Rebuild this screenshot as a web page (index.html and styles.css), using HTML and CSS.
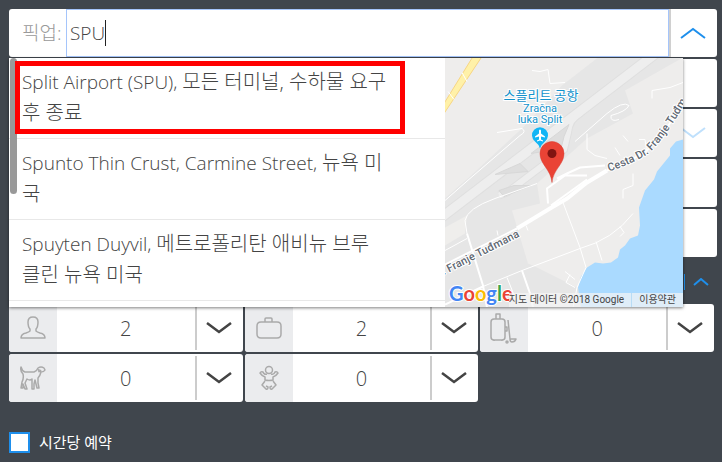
FILE: index.html
```html
<!DOCTYPE html>
<html lang="ko">
<head>
    <meta charset="UTF-8">
    <meta name="viewport" content="width=device-width, initial-scale=1.0">
    <title>픽업 예약</title>
    <link rel="stylesheet" href="styles.css">
</head>
<body>

    <form class="booking">
        <div class="field pickup">
            <label class="pickup-label" for="pickup">픽업:</label>
            <div class="pickup-box">
                <input class="pickup-input" id="pickup" type="text" value="SPU" autocomplete="off">
                <span class="caret"></span>
            </div>
            <button class="toggle" type="button" aria-label="닫기">
                <svg width="26" height="12" viewBox="0 0 26 12"><path d="M1 11 L13 2 L25 11"/></svg>
            </button>

            <!-- suggestions and map -->
            <div class="dropdown">
                <ul class="results">
                    <li class="result"><span class="highlight"></span>Split Airport (SPU), <span class="ko">모든 터미널, 수하물 요구 후 종료</span></li>
                    <li class="result">Spunto Thin Crust, Carmine Street, <span class="ko">뉴욕 미국</span></li>
                    <li class="result">Spuyten Duyvil, <span class="ko">메트로폴리탄 애비뉴 브루<span class="keep">클린</span> 뉴욕 미국</span></li>
                </ul>
                <span class="scroll-thumb"></span>
                <div class="map">
                    <svg class="map-canvas" viewBox="0 0 238 250" preserveAspectRatio="xMidYMid slice">
                        <rect width="238" height="250" fill="#eeedec"/>
                        <!-- airport ground -->
                        <path fill="#e6e6e6" d="M153 0 L117 28 L78 70 L25 119 Q12 130 0 141 V250 H150 L132 230 L92 210 L83 206 L67 153 L95 146 L92 126 L142 81 L188 56 L180 33 L238 0 Z"/>
                        <path fill="#efeeec" d="M0 170 L22 158 L20 176 L0 188 Z"/>
                        <!-- runways -->
                        <path class="runway-edge" d="M212 -5 L-5 161"/>
                        <path class="runway-edge thin" d="M136 55 Q124 62 123 75 L119 92 L62 135 L54 138"/>
                        <path class="runway" d="M212 -5 L-5 161"/>
                        <path class="runway thin" d="M136 55 Q124 62 123 75 L119 92 L62 135 L54 138"/>
                        <path class="island" d="M124 67 L119 79 L116 91 L86 96 Z M50 117 L75 106 L83 114 Z M54 133 L69 128 L86 128 L59 139 Z"/>
                        <!-- sea -->
                        <path fill="#aadaff" d="M238 82 L231 84 L225 91 V98 L212 114 L209 122 L200 133 L194 150 L195 168 L193 178 L185 181 L180 188 L175 192 L173 200 L166 205 L158 206 L150 205 L142 210 L136 219 L133 230 L136 250 H238 Z"/>
                        <!-- roads -->
                        <path fill="#fff1a8" stroke="#f7d583" d="M-1 46 L28 -1 H37 L-1 56 Z"/>
                        <path class="road main" d="M72 171 L105 151 L122 141 L142 125 L162 113"/>
                        <path class="road mid" d="M-4 209 L72 171 M162 113 L184 104 L203 92 L222 70 L240 44"/>
                        <path class="road mid" d="M103 146 L102 131 L120 118 H142 M106 148 L142 122 M112 121 L122 116 L135 110 L160 108"/>
                        <path class="road mid" d="M22 176 L38 228 L42 250 M77 213 L85 236 L88 250 M0 247 L38 229"/>
                        <path class="road" d="M38 229 L77 213 L135 191 Q168 182 188 156 M118 145 L135 190 L141 210 L132 230 L128 250"/>
                        <path class="road" d="M22 176 L20 163 Q22 151 50 141 L92 126 M0 193 L22 181 M62 220 L72 245 M151 184 L157 203 M175 169 L179 175 L175 179 M125 217 L121 225 L130 230 M120 214 L130 222"/>
                        <path class="road" d="M130 84 L162 56 Q178 43 184 48 Q181 54 166 58 Q165 65 174 62 M142 76 V92 L150 98 L162 101"/>
                        <path class="road" d="M87 13 L95 14 L103 12 L105 26 L120 25 M207 41 V33 L225 30 L238 25 M52 75 L77 71 Q82 74 75 78 L25 121 L0 143"/>
                        <path class="road" d="M188 116 V128 L178 132 V141 M52 173 L53 178 M81 168 L83 173 M178 78 L183 84 M194 82 H200 L202 96 M17 15 L22 24 M3 34 L9 42 M170 90 L175 98"/>
                        <!-- street names -->
                        <path id="street-top" fill="none" d="M164 114 Q188 106 202 97 Q216 87 242 43"/>
                        <path id="street-bottom" fill="none" d="M-4 219 L120 156"/>
                        <text class="street"><textPath href="#street-top">Cesta Dr. Franje Tuđmana</textPath></text>
                        <text class="street"><textPath href="#street-bottom">r. Franje Tuđmana</textPath></text>
                        <!-- airport -->
                        <g class="place" text-anchor="middle">
                            <text class="place-ko" x="96" y="42">스플리트 공항</text>
                            <text x="95" y="54">Zračna</text>
                            <text x="95" y="65">luka Split</text>
                        </g>
                        <path fill="#12b5f5" d="M95 91 Q94 87 90 84 A8 8 0 1 1 100 84 Q96 87 95 91 Z"/>
                        <path fill="#fff" d="M94 73 Q95 71 96 73 V76 L100 79 V80 L96 79 V82 L98 83 V84 L95 83 L92 84 V83 L94 82 V79 L90 80 V79 L94 76 Z"/>
                        <path fill="#ea4335" stroke="#d93a2e" stroke-width="0.5" d="M107 125 C106 112 95 107 95 96 A12 12 0 0 1 119 96 C119 107 108 112 107 125 Z"/>
                        <circle cx="107" cy="96" r="4.5" fill="#811411"/>
                        <text class="logo" x="4" y="243"><tspan fill="#4285f4">G</tspan><tspan fill="#ea4335">o</tspan><tspan fill="#fbbc05">o</tspan><tspan fill="#4285f4">g</tspan><tspan fill="#34a853">l</tspan><tspan fill="#ea4335">e</tspan></text>
                    </svg>
                    <div class="attribution">
                        <span class="map-data">지도 데이터 ©2018 Google</span>
                        <a class="terms" href="#">이용약관</a>
                    </div>
                </div>
            </div>
        </div>

        <div class="field"></div>
        <div class="field faded">
            <svg width="26" height="12" viewBox="0 0 26 12"><path d="M1 1 L13 10 L25 1"/></svg>
        </div>
        <div class="field"></div>
        <div class="field"></div>

        <div class="extras">
            <button class="extras-toggle" type="button" aria-label="접기">
                <svg width="16" height="8" viewBox="0 0 16 8"><path d="M1 7 L8 1 L15 7"/></svg>
            </button>
        </div>

        <div class="counters">
            <div class="counter">
                <label class="counter-icon" for="people" aria-label="승객">
                    <svg width="26" height="24" viewBox="0 0 26 24"><path d="M10 15 V13 Q8 11 8 6 Q8 1 13 1 Q18 1 18 6 Q18 11 16 13 V15 Q17 16 20 17 Q25 18 25 22 H1 Q1 18 6 17 Q9 16 10 15 Z"/></svg>
                </label>
                <select class="counter-value" id="people"><option>2</option></select>
                <svg class="arrow" width="26" height="12" viewBox="0 0 26 12"><path d="M1 1 L13 10 L25 1"/></svg>
            </div>
            <div class="counter">
                <label class="counter-icon" for="bags" aria-label="수하물">
                    <svg width="26" height="24" viewBox="0 0 26 24"><path d="M5 6 H21 Q25 6 25 10 V18 Q25 22 21 22 H5 Q1 22 1 18 V10 Q1 6 5 6 Z M9 6 V3 Q9 2 10 2 H15 Q16 2 16 3 V6"/></svg>
                </label>
                <select class="counter-value" id="bags"><option>2</option></select>
                <svg class="arrow" width="26" height="12" viewBox="0 0 26 12"><path d="M1 1 L13 10 L25 1"/></svg>
            </div>
            <div class="counter">
                <label class="counter-icon" for="sports" aria-label="스포츠 장비">
                    <svg width="28" height="32" viewBox="0 0 28 32"><path d="M4 7 H12 Q15 7 15 10 V25 Q15 28 12 28 H4 Q1 28 1 25 V10 Q1 7 4 7 Z M6 7 V2 H10 V7 M4 28 V29 M12 28 V29 M15 15 H17 V19 H15 M18 8 L20 27 H26 Q25 30 22 30 Q20 30 20 27"/><circle cx="17" cy="30" r="1"/></svg>
                </label>
                <select class="counter-value" id="sports"><option>0</option></select>
                <svg class="arrow" width="26" height="12" viewBox="0 0 26 12"><path d="M1 1 L13 10 L25 1"/></svg>
            </div>
            <div class="counter">
                <label class="counter-icon" for="pets" aria-label="반려동물">
                    <svg width="26" height="24" viewBox="0 0 26 24"><path d="M1 1 Q2 5 5 6 H14 Q17 5 18 2 Q21 0 24 2 L25 4 Q24 6 21 6 Q20 10 18 12 L18 17 L19 22 H17 L15 14 L14 18 V23 H12 L12 13 Q10 15 7 13 L5 17 L7 23 H5 L3 18 V22 H1 L2 16 Q4 12 3 8 Q0 5 1 1 Z M19 3 Q18 8 21 4"/></svg>
                </label>
                <select class="counter-value" id="pets"><option>0</option></select>
                <svg class="arrow" width="26" height="12" viewBox="0 0 26 12"><path d="M1 1 L13 10 L25 1"/></svg>
            </div>
            <div class="counter">
                <label class="counter-icon" for="infants" aria-label="유아">
                    <svg width="20" height="26" viewBox="0 0 20 26"><circle cx="10" cy="5" r="3.5"/><path d="M8 9 Q5 10 4 7 Q2 6 1 8 Q3 11 6 12 V15 Q10 16 14 15 V12 Q17 11 19 8 Q18 6 16 7 Q15 10 12 9 M6 16 L3 20 L7 24 Q9 25 9 22 L7 21 M14 16 L17 20 L13 24 Q11 25 11 22 L13 21"/></svg>
                </label>
                <select class="counter-value" id="infants"><option>0</option></select>
                <svg class="arrow" width="26" height="12" viewBox="0 0 26 12"><path d="M1 1 L13 10 L25 1"/></svg>
            </div>
        </div>

        <div class="hourly">
            <input class="hourly-check" id="hourly" type="checkbox">
            <label for="hourly">시간당 예약</label>
        </div>
    </form>

</body>
</html>
```

FILE: styles.css
```css
* { box-sizing: border-box; }
body { margin: 0; background-color: #40464d; color: #444; font-family: "Open Sans", "Noto Sans CJK KR", sans-serif; font-weight: 300; font-size: 19px; }
svg { display: block; fill: none; }
button { background: none; border: 0; padding: 0; cursor: pointer; }
.booking { padding: 9px 5px 9px 9px; display: flex; flex-direction: column; gap: 2px; }
.field { background: #fff; height: 48px; border-radius: 3px; }

/* pickup row */
.pickup { position: relative; display: flex; }
.pickup-label { width: 57px; padding-left: 13px; line-height: 48px; color: #999; white-space: nowrap; }
.pickup-box { position: relative; flex: 1; display: flex; }
.pickup-input { flex: 1; min-width: 0; border: 1px solid #a5c5fb; padding: 0 3px; background: #fff; font: inherit; color: #444; outline: none; }
.caret { position: absolute; left: 39px; top: 11px; width: 1px; height: 26px; background: #222; }
.toggle { width: 48px; padding-right: 3px; display: flex; align-items: center; justify-content: center; border-left: 2px solid #d0d0d0; }
.toggle path { stroke: #1e8fec; stroke-width: 2; }

.dropdown { position: absolute; z-index: 2; top: 49px; left: 0; right: 34px; height: 249px; display: flex; background: #fff; box-shadow: 0 1px 3px rgba(0,0,0,0.5); }
.results { flex: 1; margin: 0; padding: 0; list-style: none; overflow: hidden; }
.result { position: relative; padding: 9px 48px 9px 13px; line-height: 31px; border-bottom: 1px solid #e8e8e8; }
.ko { font-size: 20px; line-height: 30px; }
.keep { white-space: nowrap; word-break: keep-all; }
.highlight { position: absolute; z-index: 2; top: 3px; left: 6px; right: 40px; bottom: 4px; border: 5px solid #f00; }
.scroll-thumb { position: absolute; top: 0; left: 1px; width: 7px; height: 136px; border-radius: 4px; background: #999; }

/* map */
.map { position: relative; width: 238px; overflow: hidden; }
.map-canvas { width: 100%; height: 100%; }
.runway { stroke: #eeeeee; stroke-width: 9; }
.runway-edge { stroke: #dfdfdf; stroke-width: 11; }
.runway.thin { stroke-width: 6; }
.runway-edge.thin { stroke-width: 8; }
.island { fill: #dedede; stroke: #d8d8d8; }
.road { stroke: #fff; stroke-width: 1; }
.road.mid { stroke-width: 2; }
.road.main { stroke-width: 4; }
.street { font: 500 11px Roboto, sans-serif; fill: #5f6872; stroke: #fff; stroke-width: 2; paint-order: stroke; }
.place { font: 400 11px Roboto, "Noto Sans CJK KR", sans-serif; fill: #1392cc; stroke: #fff; stroke-width: 2; paint-order: stroke; }
.place-ko { font-size: 13px; }
.logo { font: 700 20px Lato, sans-serif; stroke: #fff; stroke-width: 2; paint-order: stroke; }
.attribution { position: absolute; right: 0; bottom: 0; display: flex; height: 14px; font: 400 10px/14px Roboto, "Noto Sans CJK KR", sans-serif; background: rgba(245,245,245,0.7); white-space: nowrap; }
.map-data { padding-right: 7px; }
.terms { padding: 0 7px; border-left: 1px solid #b8dcf5; color: #444; text-decoration: none; }

.faded { display: flex; align-items: center; justify-content: flex-end; padding-right: 11px; }
.faded path { stroke: #bfe0fc; stroke-width: 2; }

.extras { height: 43px; display: flex; justify-content: flex-end; align-items: center; padding: 3px 8px 0 0; }
.extras-toggle { padding: 4px 0 4px 8px; border-left: 1px solid #1e8fec; }
.extras-toggle path { stroke: #1e8fec; stroke-width: 2; }

/* counters */
.counters { display: grid; grid-template-columns: repeat(3, 1fr); gap: 2px; padding-right: 3px; }
.counter { display: grid; grid-template-columns: 48px 1fr 48px; height: 48px; background: #fff; border-radius: 3px; overflow: hidden; }
.counter-icon { display: flex; align-items: center; justify-content: center; background: #ebecee; }
.counter-icon svg { stroke: #aaa; stroke-width: 1.5; stroke-linejoin: round; }
.counter-value { grid-row: 1; grid-column: 2 / 4; appearance: none; border: 0; margin: 0; padding: 0 48px 0 0; font: inherit; font-size: 20px; color: #444; text-align: center; text-align-last: center; background: linear-gradient(#ccc, #ccc) right 46px center / 2px 44px no-repeat; }
.arrow { grid-row: 1; grid-column: 3; place-self: center; pointer-events: none; }
.arrow path { stroke: #444; stroke-width: 2.5; }

.hourly { display: flex; align-items: center; gap: 9px; margin-top: 28px; color: #fff; font-size: 15px; font-weight: 400; line-height: 21px; }
.hourly-check { appearance: none; width: 21px; height: 21px; margin: 0; border: 2px solid #1e8fec; background: #fff; }
```
